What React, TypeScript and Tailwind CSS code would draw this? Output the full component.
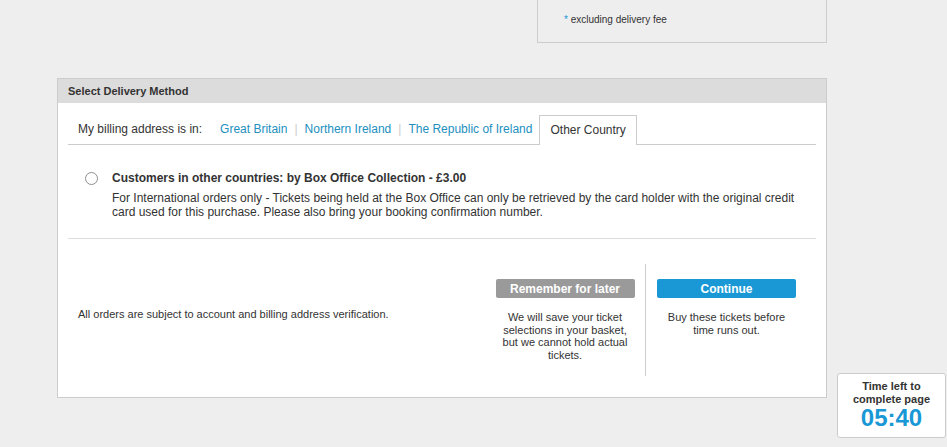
import React from 'react';

const links = ['Great Britain', 'Northern Ireland', 'The Republic of Ireland'];

const TimerBox = () => (
    <div className="fixed left-[837px] top-[373px] w-[109px] h-[65px] bg-white border border-[#cccccc] rounded-[3px] flex flex-col items-center pt-[6px] text-[#333]">
        <div className="text-[11px] font-bold leading-[13px] text-center">Time left to<br />complete page</div>
        <div className="text-[24px] font-bold leading-[24px] text-[#1a98d5]">05:40</div>
    </div>
);

export default function App() {
    return (
        <div
            className="min-h-[447px] bg-[#eeeeee] text-[#333333]"
            style={{ fontFamily: '"Liberation Sans", Arial, sans-serif' }}
        >
            <div className="w-[770px] ml-[57px]">
                {/* price summary box, cut off at top */}
                <div className="ml-auto w-[290px] h-[43px] border-x border-b border-[#cccccc] pl-[26px] pt-[14px] text-[10px] leading-[12px]">
                    <span className="text-[#1a98d5]">*</span> excluding delivery fee
                </div>

                <div className="mt-[35px] border border-[#cccccc] bg-white">
                    <div className="h-[24px] bg-[#dcdcdc] px-[10px] flex items-center text-[11px] font-bold">
                        Select Delivery Method
                    </div>

                    <div className="px-[10px] pt-[12px]">
                        {/* billing address tabs */}
                        <div className="flex items-end h-[30px] border-b border-[#cccccc] text-[12px]">
                            <div className="flex items-center h-[29px] pb-[2px] pl-[10px] pr-[18px]">My billing address is in:</div>
                            {links.map((l, i) => (
                                <div key={l} className="flex items-center h-[29px] pb-[2px]">
                                    <a className="text-[#2290bf] cursor-pointer">{l}</a>
                                    {i < links.length - 1 && <span className="text-[#cccccc] mx-[7px]">|</span>}
                                </div>
                            ))}
                            <div className="ml-[7px] -mb-px h-[30px] pb-[2px] px-[10px] flex items-center bg-white border border-b-0 border-[#cccccc]">
                                Other Country
                            </div>
                        </div>

                        {/* delivery option */}
                        <div className="flex pt-[26px] pb-[19px] border-b border-[#dddddd]">
                            <div className="w-[44px] shrink-0 flex justify-end pr-[14px] pt-[1px]">
                                <span className="block w-[13px] h-[13px] rounded-full border border-[#8f8f8f] bg-white" />
                            </div>
                            <div className="text-[12px] leading-[14px]">
                                <div className="font-bold">Customers in other countries: by Box Office Collection - £3.00</div>
                                <div className="mt-[6px] pr-[10px]">
                                    For International orders only - Tickets being held at the Box Office can only be retrieved by the card holder with the original credit card used for this purchase. Please also bring your booking confirmation number.
                                </div>
                            </div>
                        </div>

                        {/* actions */}
                        <div className="flex pt-[25px] pb-[21px]">
                            <div className="flex-1 flex items-center pl-[10px] pb-[12px] text-[11px]">
                                All orders are subject to account and billing address verification.
                            </div>
                            <div className="w-[161px] h-[112px] border-r border-[#cccccc] flex flex-col items-center pt-[15px]">
                                <button className="w-[139px] h-[19px] bg-[#9a9a9a] text-white text-[12px] font-bold rounded-[2px]">
                                    Remember for later
                                </button>
                                <p className="mt-[13px] w-[125px] text-center text-[11px] leading-[12.5px]">
                                    We will save your ticket selections in your basket, but we cannot hold actual tickets.
                                </p>
                            </div>
                            <div className="w-[161px] mr-[9px] h-[112px] flex flex-col items-center pt-[15px]">
                                <button className="w-[139px] h-[19px] bg-[#1a98d5] text-white text-[12px] font-bold rounded-[2px]">
                                    Continue
                                </button>
                                <p className="mt-[13px] w-[125px] text-center text-[11px] leading-[12.5px]">
                                    Buy these tickets before time runs out.
                                </p>
                            </div>
                        </div>
                    </div>
                </div>
            </div>
            <TimerBox />
        </div>
    );
}
